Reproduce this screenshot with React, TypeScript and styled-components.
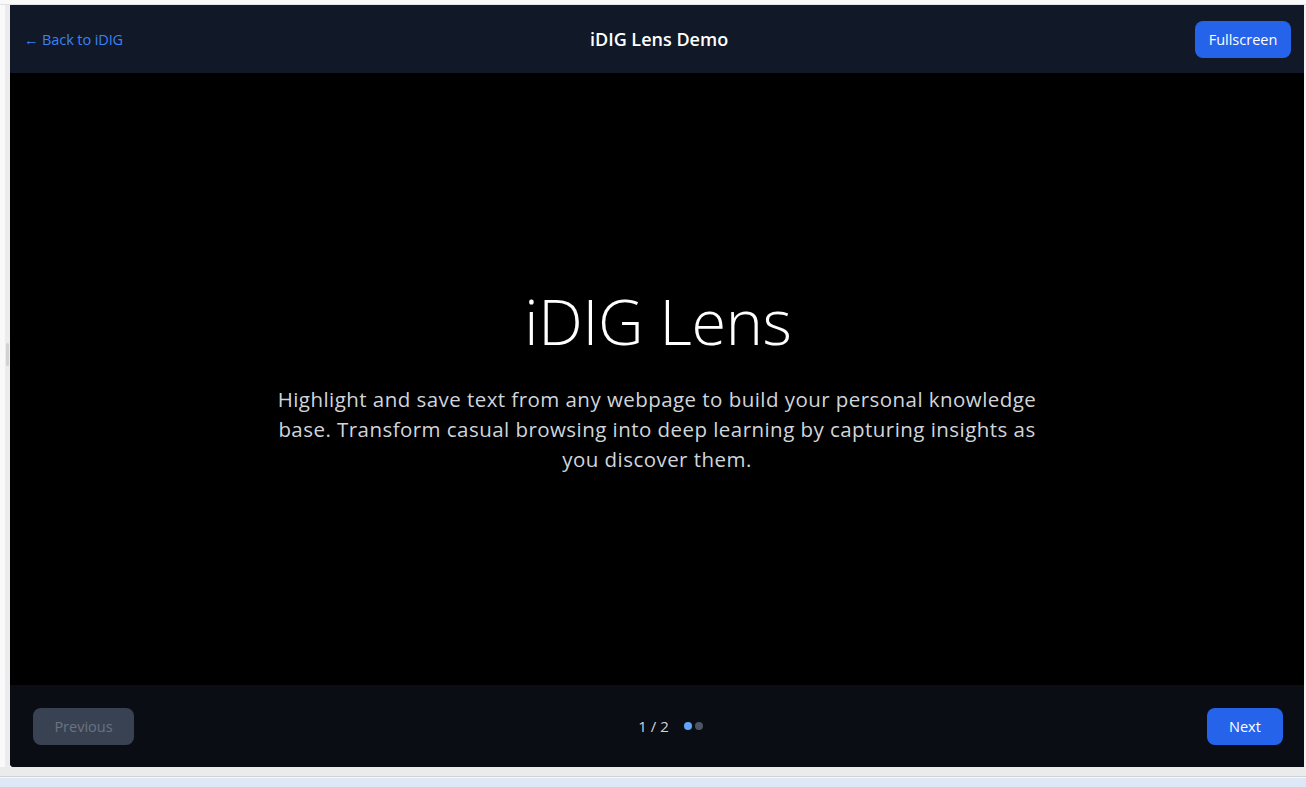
import React from "react";
import styled, { createGlobalStyle } from "styled-components";

const Global = createGlobalStyle`
  html, body { margin: 0; padding: 0; }
  body {
    background: #f9f9fa;
    font-family: "Open Sans", "Noto Sans", sans-serif;
    overflow: hidden;
  }
  * { box-sizing: border-box; }
`;

const Page = styled.div`
  width: 1306px;
  height: 787px;
  display: flex;
  flex-direction: column;
`;

const TopGap = styled.div`
  height: 5px;
  background: #f9f9fa;
  border-bottom: 1px solid #e3e3e5;
`;

const Middle = styled.div`
  display: flex;
  height: 762px;
`;

const Gutter = styled.div`
  width: 10px;
  display: flex;
  justify-content: flex-end;
  background: #f9f9fa;
`;

const Track = styled.div`
  width: 5px;
  background: #ececee;
  position: relative;
`;

const Thumb = styled.div`
  position: absolute;
  left: 1px;
  top: 338px;
  width: 3px;
  height: 23px;
  border-radius: 2px;
  background: #d2d2d5;
`;

const RightEdge = styled.div`
  width: 2px;
  background: #f3f3f4;
`;

const Window = styled.div`
  flex: 1;
  display: flex;
  flex-direction: column;
  background: #000;
  border-bottom-left-radius: 4px;
  overflow: hidden;
`;

const Header = styled.header`
  height: 68px;
  flex: none;
  background: #111827;
  display: flex;
  justify-content: space-between;
  align-items: center;
  padding: 0 13px 0 14px;
`;

const BackLink = styled.a`
  color: #3b82f6;
  font-size: 14.5px;
  text-decoration: none;
  letter-spacing: -0.1px;
`;

const Title = styled.h1`
  margin: 0;
  color: #fff;
  font-size: 18px;
  font-weight: 600;
  letter-spacing: 0;
`;

const Button = styled.button<{ $variant?: "primary" | "disabled" }>`
  height: 37px;
  border: none;
  border-radius: 8px;
  padding: 0;
  font-family: inherit;
  font-size: 14.5px;
  background: ${(p) => (p.$variant === "disabled" ? "#394253" : "#2563eb")};
  color: ${(p) => (p.$variant === "disabled" ? "#6b7280" : "#fff")};
  cursor: ${(p) => (p.$variant === "disabled" ? "not-allowed" : "pointer")};
`;

const HeaderButton = styled(Button)`
  width: 96px;
`;

const Stage = styled.main`
  flex: 1;
  display: flex;
  flex-direction: column;
  align-items: center;
  justify-content: center;
  padding-top: 4px;
  text-align: center;
`;

const Hero = styled.h2`
  margin: 0 0 32px 2px;
  color: #fff;
  font-size: 63px;
  font-weight: 300;
  line-height: 1;
  letter-spacing: -0.3px;
`;

const Lead = styled.p`
  margin: 0;
  max-width: 768px;
  color: #d1d5db;
  font-size: 20.5px;
  line-height: 30px;
  letter-spacing: 0.45px;
`;

const Footer = styled.footer`
  height: 82px;
  flex: none;
  background: #0a0d14;
  display: flex;
  justify-content: space-between;
  align-items: center;
  padding: 0 21px 0 23px;
`;

const PrevButton = styled(Button)`
  width: 101px;
`;

const NextButton = styled(Button)`
  width: 76px;
`;

const Pager = styled.div`
  display: flex;
  align-items: center;
  gap: 15px;
`;

const Count = styled.span`
  color: #d1d5db;
  font-size: 15px;
`;

const Dots = styled.div`
  display: flex;
  gap: 3px;
`;

const Dot = styled.span<{ $active?: boolean }>`
  width: 8px;
  height: 8px;
  border-radius: 50%;
  background: ${(p) => (p.$active ? "#60a5fa" : "#4b5563")};
`;

const BottomBand = styled.div`
  flex: 1;
  display: flex;
  flex-direction: column;
`;

const BandGray = styled.div`
  height: 10px;
  background: #ebebeb;
  border-bottom: 1px solid #cfd3d8;
`;

const BandBlue = styled.div`
  flex: 1;
  background: #dee7f6;
  border-top: 1px solid #f5f7fb;
`;

export default function App() {
  return (
    <>
      <Global />
      <Page>
        <TopGap />
        <Middle>
          <Gutter>
            <Track>
              <Thumb />
            </Track>
          </Gutter>
          <Window>
            <Header>
              <BackLink href="#">← Back to iDIG</BackLink>
              <Title>iDIG Lens Demo</Title>
              <HeaderButton $variant="primary">Fullscreen</HeaderButton>
            </Header>
            <Stage>
              <Hero>iDIG Lens</Hero>
              <Lead>
                Highlight and save text from any webpage to build your personal
                knowledge base. Transform casual browsing into deep learning by
                capturing insights as you discover them.
              </Lead>
            </Stage>
            <Footer>
              <PrevButton $variant="disabled" disabled>
                Previous
              </PrevButton>
              <Pager>
                <Count>1 / 2</Count>
                <Dots>
                  <Dot $active />
                  <Dot />
                </Dots>
              </Pager>
              <NextButton $variant="primary">Next</NextButton>
            </Footer>
          </Window>
          <RightEdge />
        </Middle>
        <BottomBand>
          <BandGray />
          <BandBlue />
        </BottomBand>
      </Page>
    </>
  );
}
